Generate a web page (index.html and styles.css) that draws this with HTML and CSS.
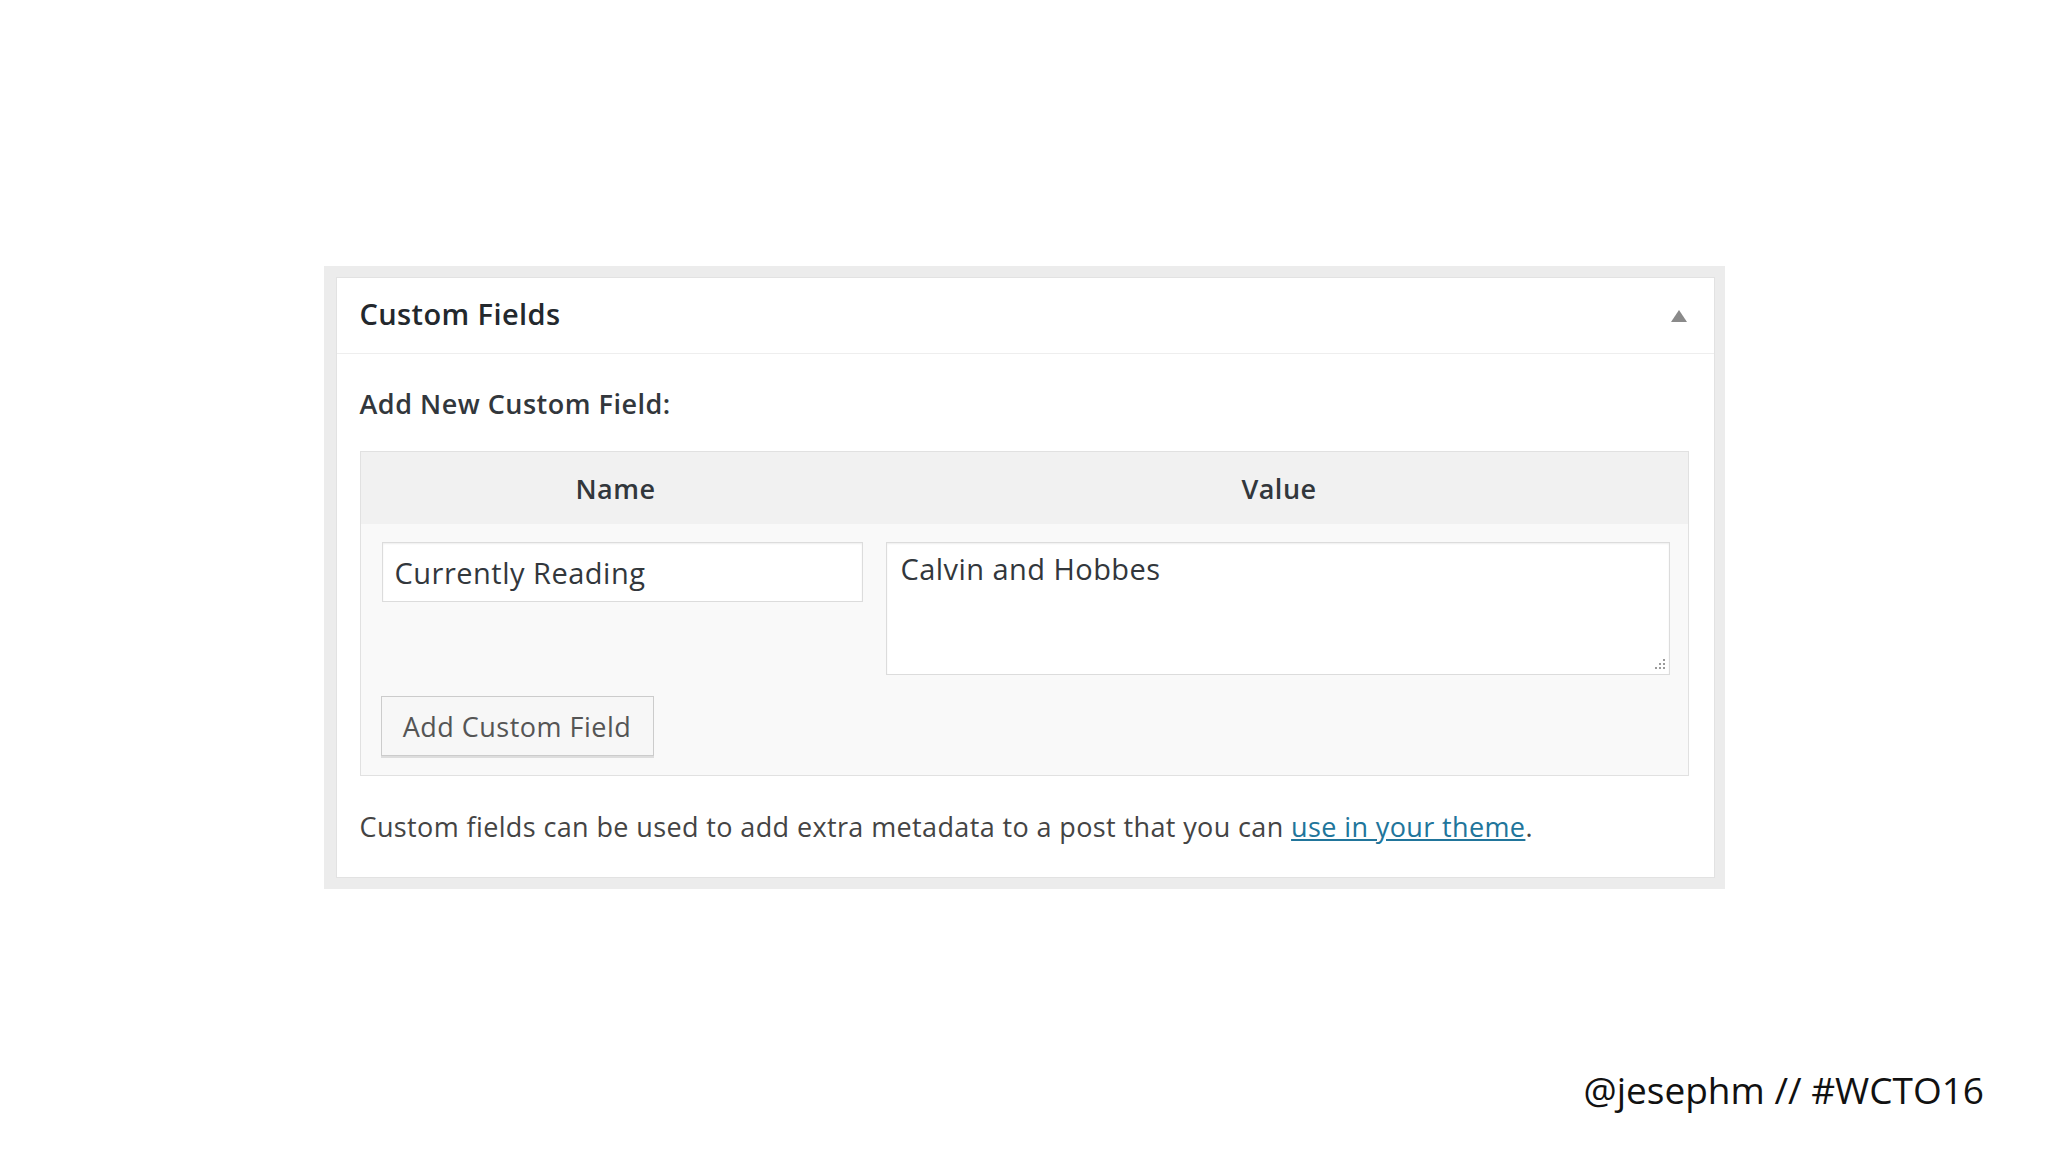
FILE: index.html
```html
<!DOCTYPE html>
<html lang="en">
<head>
<meta charset="utf-8">
<title>Custom Fields</title>
<link rel="stylesheet" href="styles.css">
</head>
<body>
<div class="page">
  <div class="frame">
    <section class="postbox">
      <header class="postbox-head">
        <h2 class="postbox-title">Custom Fields</h2>
        <svg class="toggle" width="18" height="14" viewBox="0 0 18 14"><polygon points="9,1 17,13 1,13" fill="#8a8a8a"/></svg>
      </header>
      <div class="postbox-body">
        <p class="add-label">Add New Custom Field:</p>
        <div class="meta-table">
          <div class="meta-head">
            <div class="col-name">Name</div>
            <div class="col-value">Value</div>
          </div>
          <div class="meta-row">
            <div class="cell-name">
              <input class="field-input" type="text" value="Currently Reading">
            </div>
            <div class="cell-value">
              <div class="area-wrap">
                <textarea class="field-area">Calvin and Hobbes</textarea>
                <svg class="grip" width="14" height="14" viewBox="0 0 14 14">
                  <g fill="#9a9a9a">
                    <rect x="11" y="2" width="2" height="2"/>
                    <rect x="7" y="6" width="2" height="2"/>
                    <rect x="11" y="6" width="2" height="2"/>
                    <rect x="3" y="10" width="2" height="2"/>
                    <rect x="7" y="10" width="2" height="2"/>
                    <rect x="11" y="10" width="2" height="2"/>
                  </g>
                </svg>
              </div>
            </div>
          </div>
          <div class="meta-actions">
            <button class="btn" type="button">Add Custom Field</button>
          </div>
        </div>
        <p class="hint">Custom fields can be used to add extra metadata to a post that you can <a href="#" class="hint-link">use in your theme</a>.</p>
      </div>
    </section>
  </div>
  <div class="credit">@jesephm // #WCTO16</div>
</div>
</body>
</html>
```
FILE: styles.css
```css
* { box-sizing: border-box; }

html, body {
  margin: 0;
  padding: 0;
  background: #ffffff;
}

body {
  font-family: "Open Sans", "Noto Sans", "Liberation Sans", sans-serif;
  color: #444;
}

.page {
  width: 2048px;
  height: 1152px;
  display: flex;
  flex-direction: column;
}

.frame {
  width: 1401px;
  margin: 266px auto 0;
  padding: 11px 10px 11px 12px;
  background: #ececec;
}

.postbox {
  background: #ffffff;
  border: 1px solid #e2e2e2;
}

.postbox-head {
  height: 76px;
  display: flex;
  align-items: center;
  justify-content: space-between;
  padding: 0 26px 4px 23px;
  border-bottom: 1px solid #eeeeee;
}

.postbox-title {
  margin: 0;
  font-size: 29px;
  font-weight: 600;
  color: #23282d;
  letter-spacing: 0.4px;
}

.toggle { display: block; margin-top: 4px; }

.postbox-body {
  padding: 0 25px 0 23px;
}

.add-label {
  margin: 0;
  padding-top: 31px;
  height: 97px;
  font-size: 27px;
  font-weight: 600;
  color: #32373c;
  letter-spacing: 0.5px;
}

.meta-table {
  background: #f9f9f9;
  border: 1px solid #e1e1e1;
}

.meta-head {
  display: grid;
  grid-template-columns: 510px 1fr;
  height: 72px;
  align-items: center;
  background: #f1f1f1;
  font-size: 27px;
  font-weight: 600;
  color: #32373c;
  text-align: center;
  letter-spacing: 0.5px;
}

.meta-row {
  display: grid;
  grid-template-columns: 504px 1fr;
  padding: 18px 18px 0 21px;
}

.cell-name { padding-right: 23px; }

.field-input {
  width: 100%;
  height: 60px;
  border: 1px solid #dcdcdc;
  background: #ffffff;
  box-shadow: inset 0 1px 2px rgba(0,0,0,0.07);
  font-family: inherit;
  font-size: 29px;
  color: #32373c;
  padding: 0 12px;
  letter-spacing: 0.5px;
}

.area-wrap {
  position: relative;
}

.field-area {
  display: block;
  width: 100%;
  height: 133px;
  border: 1px solid #dcdcdc;
  background: #ffffff;
  box-shadow: inset 0 1px 2px rgba(0,0,0,0.07);
  font-family: inherit;
  font-size: 29px;
  line-height: 40px;
  color: #32373c;
  padding: 6px 14px;
  resize: none;
  letter-spacing: 0.45px;
}

.grip {
  position: absolute;
  right: 4px;
  bottom: 4px;
}

.meta-actions {
  padding: 21px 20px 19px;
}

.btn {
  height: 60px;
  width: 273px;
  padding: 0;
  border: 1px solid #cccccc;
  background: #f7f7f7;
  box-shadow: 0 2px 0 #dddddd;
  font-family: inherit;
  font-size: 27px;
  color: #555555;
  letter-spacing: 0.5px;
  text-align: center;
}

.hint {
  margin: 0;
  padding: 33px 0 32px;
  font-size: 27px;
  line-height: 36px;
  color: #444;
  letter-spacing: 0.38px;
}

.hint-link {
  color: #21759b;
  text-decoration: underline;
}

.credit {
  margin-top: auto;
  align-self: flex-end;
  padding: 0 64px 37px 0;
  font-size: 37px;
  line-height: 50px;
  color: #111;
}
```
